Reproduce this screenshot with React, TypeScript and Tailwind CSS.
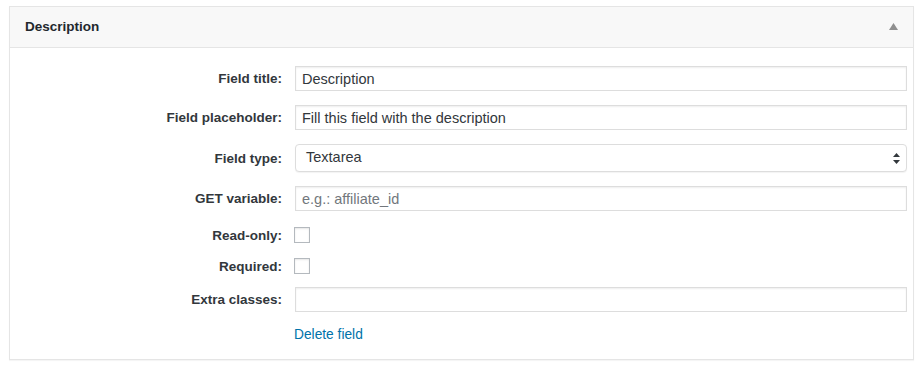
import React from 'react';

const font = { fontFamily: '"Liberation Sans", Arial, sans-serif' };

interface RowProps {
  label: string;
  className?: string;
  children: React.ReactNode;
}

const Row = ({ label, className = '', children }: RowProps) => (
  <div className={`flex items-center ${className}`}>
    <label className="w-[272px] shrink-0 pt-[2px] text-right text-[13.5px] font-bold text-[#32373c]">
      {label}
    </label>
    <div className="ml-[13px] flex flex-1 items-center">{children}</div>
  </div>
);

const inputCls =
  'h-[25px] w-full border border-[#dddddd] bg-white px-[6px] text-[14.5px] text-[#32373c] shadow-[inset_0_1px_2px_rgba(0,0,0,0.07)] outline-none placeholder:text-[#72777c]';

const Checkbox = () => (
  <span className="block h-[16px] w-[16px] border border-[#b4b9be] bg-white shadow-[inset_0_1px_2px_rgba(0,0,0,0.1)]" />
);

export default function App() {
  return (
    <div className="min-h-[370px] bg-white pt-[6px] pl-[9px]" style={font}>
      <div className="w-[905px] border border-[#e5e5e5] bg-white shadow-[0_1px_1px_rgba(0,0,0,0.04)]">
        <div className="flex h-[41px] items-center justify-between border-b border-[#e5e5e5] bg-[#f8f8f8] pl-[15px] pr-[15px]">
          <h2 className="pt-[1px] text-[13.5px] font-bold text-[#23282d]">Description</h2>
          <svg width="9" height="7" viewBox="0 0 9 7" className="mt-[-1px]">
            <path d="M4.5 0L9 7H0z" fill="#8f8f8f" />
          </svg>
        </div>
        <div className="pt-[18px] pr-[6px] pb-[15px]">
          <Row label="Field title:">
            <input className={inputCls} defaultValue="Description" />
          </Row>
          <Row label="Field placeholder:" className="mt-[14px]">
            <input className={inputCls} defaultValue="Fill this field with the description" />
          </Row>
          <Row label="Field type:" className="mt-[14px]">
            <div className="flex h-[28px] w-full items-center justify-between rounded-[4px] border border-[#dddddd] bg-white pl-[10px] pr-[6px] shadow-[0_1px_1px_rgba(0,0,0,0.05)]">
              <span className="text-[14.5px] text-[#32373c]">Textarea</span>
              <svg width="7" height="11" viewBox="0 0 7 11">
                <path d="M3.5 0L7 4H0z" fill="#32373c" />
                <path d="M3.5 11L7 7H0z" fill="#32373c" />
              </svg>
            </div>
          </Row>
          <Row label="GET variable:" className="mt-[14px]">
            <input className={inputCls} placeholder="e.g.: affiliate_id" />
          </Row>
          <Row label="Read-only:" className="mt-[16px] h-[16px]">
            <span className="-ml-[1px]">
              <Checkbox />
            </span>
          </Row>
          <Row label="Required:" className="mt-[15px] h-[16px]">
            <span className="-ml-[1px]">
              <Checkbox />
            </span>
          </Row>
          <Row label="Extra classes:" className="mt-[13px]">
            <input className={inputCls} />
          </Row>
          <div className="mt-[14px] flex">
            <span className="ml-[284px] text-[13.75px] leading-[18px] text-[#0073aa]">Delete field</span>
          </div>
        </div>
      </div>
    </div>
  );
}
